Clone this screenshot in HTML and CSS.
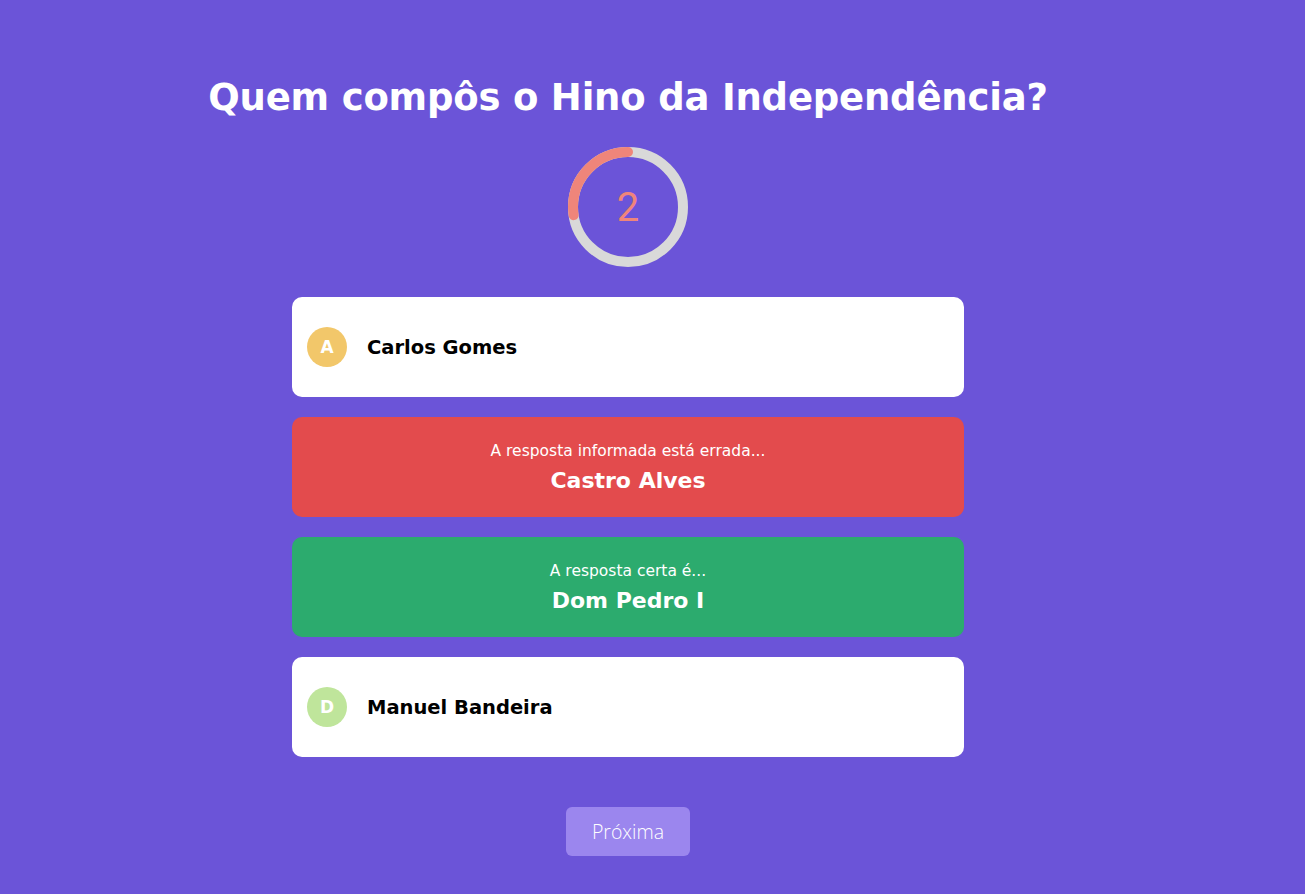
FILE: index.html
```html
<!DOCTYPE html>
<html lang="pt-BR">
<head>
<meta charset="utf-8">
<title>Quiz</title>
<link rel="stylesheet" href="styles.css">
</head>
<body>
<main class="quiz">
  <h1 class="question">Quem compôs o Hino da Independência?</h1>
  <div class="timer">
    <svg class="timer-ring" width="120" height="120" viewBox="0 0 120 120">
      <circle cx="60" cy="60" r="55" fill="none" stroke="#d9d9d9" stroke-width="10"/>
      <circle cx="60" cy="60" r="55" fill="none" stroke="#ef857a" stroke-width="10" stroke-linecap="round" stroke-dasharray="94.5 400" transform="rotate(-90 60 60) scale(1 -1) translate(0 -120)"/>
    </svg>
    <span class="timer-value">2</span>
  </div>
  <div class="answers">
    <div class="answer">
      <span class="letter letter-a">A</span>
      <span class="answer-text">Carlos Gomes</span>
    </div>
    <div class="answer feedback wrong">
      <span class="feedback-label">A resposta informada está errada...</span>
      <span class="feedback-text">Castro Alves</span>
    </div>
    <div class="answer feedback right">
      <span class="feedback-label">A resposta certa é...</span>
      <span class="feedback-text">Dom Pedro I</span>
    </div>
    <div class="answer">
      <span class="letter letter-d">D</span>
      <span class="answer-text">Manuel Bandeira</span>
    </div>
  </div>
  <button class="next" type="button">Próxima</button>
</main>
</body>
</html>
```

FILE: styles.css
```css
html, body {
  margin: 0;
  padding: 0;
}
body {
  background: #6b54d8;
  font-family: "DejaVu Sans", "Open Sans", sans-serif;
  min-height: 894px;
}
.quiz {
  display: flex;
  flex-direction: column;
  align-items: center;
  padding-top: 68px;
  padding-right: 49px;
}
.question {
  margin: 0;
  color: #fff;
  font-size: 37px;
  line-height: 60px;
  font-weight: 700;
  letter-spacing: -0.2px;
}
.timer {
  position: relative;
  width: 120px;
  height: 120px;
  margin-top: 19px;
}
.timer-ring {
  display: block;
}
.timer-value {
  position: absolute;
  inset: 0;
  display: flex;
  align-items: center;
  justify-content: center;
  font-family: Roboto, "Open Sans", sans-serif;
  font-weight: 400;
  font-size: 40px;
  color: #ef857a;
}
.answers {
  margin-top: 30px;
  width: 672px;
  display: flex;
  flex-direction: column;
  gap: 20px;
}
.answer {
  height: 100px;
  box-sizing: border-box;
  background: #fff;
  border-radius: 10px;
  display: flex;
  align-items: center;
  padding: 0 15px;
  gap: 20px;
}
.letter {
  width: 40px;
  height: 40px;
  border-radius: 50%;
  display: flex;
  align-items: center;
  justify-content: center;
  color: #fff;
  font-weight: 700;
  font-size: 17px;
}
.letter-a { background: #f2c76a; }
.letter-d { background: #bfe59b; }
.answer-text {
  font-size: 19.5px;
  font-weight: 700;
  color: #000;
}
.feedback {
  flex-direction: column;
  justify-content: center;
  gap: 0;
  padding-top: 5px;
  color: #fff;
}
.wrong { background: #e34b4d; }
.right { background: #2cab6e; }
.feedback-label {
  font-size: 15.5px;
  line-height: 22px;
}
.feedback-text {
  font-size: 22px;
  font-weight: 700;
  line-height: 38px;
}
.next {
  margin-top: 50px;
  width: 124px;
  height: 49px;
  border: none;
  border-radius: 6px;
  background: #9b86ee;
  color: #ffffff;
  font-family: "Open Sans", sans-serif;
  font-weight: 300;
  font-size: 19.5px;
  cursor: pointer;
}
```
